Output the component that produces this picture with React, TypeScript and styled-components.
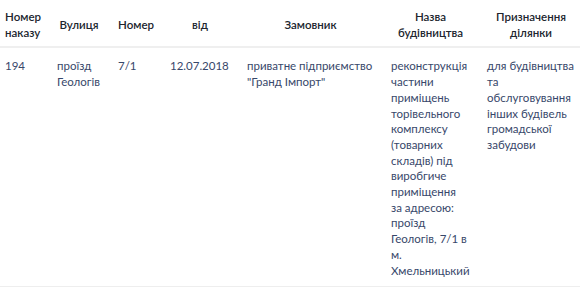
import styled, { createGlobalStyle } from "styled-components"

const GlobalStyle = createGlobalStyle`
  body {
    margin: 0;
    background: #fff;
    font-family: Lato, "Open Sans", sans-serif;
  }
`

type Column = {
  key: string
  title: string[]
  pad: number
}

// pad: right padding of the body cell, sets how wide each text column wraps
const columns: Column[] = [
  { key: "order", title: ["Номер", "наказу"], pad: 12 },
  { key: "street", title: ["Вулиця"], pad: 12 },
  { key: "number", title: ["Номер"], pad: 12 },
  { key: "date", title: ["від"], pad: 12 },
  { key: "customer", title: ["Замовник"], pad: 10 },
  { key: "building", title: ["Назва", "будівництва"], pad: 19 },
  { key: "purpose", title: ["Призначення", "ділянки"], pad: 5 },
]

const rows: Record<string, string>[] = [
  {
    order: "194",
    street: "проїзд Геологів",
    number: "7/1",
    date: "12.07.2018",
    customer: "приватне підприємство \"Гранд Імпорт\"",
    building:
      "реконструкція частини приміщень торівельного комплексу (товарних складів) під виробгиче приміщення за адресою: проїзд Геологів, 7/1 в м. Хмельницький",
    purpose:
      "для будівництва та обслуговування інших будівель громадської забудови",
  },
]

const Table = styled.div`
  width: 580px;
  font-family: Lato, "Open Sans", sans-serif;
`

const Row = styled.div<{ $head?: boolean }>`
  display: grid;
  grid-template-columns: 57px 61px 52px 77px 144px 96px 93px;
  align-items: ${(p) => (p.$head ? "center" : "stretch")};
  border-bottom: ${(p) => (p.$head ? "2px solid #efefef" : "1px solid #eeeeee")};
`

const HeadCell = styled.div`
  padding: 9px 17px 6px 0;
  text-align: center;
  font-size: 11.5px;
  line-height: 15.7px;
  font-weight: 600;
  color: #20252e;

  &:first-child {
    padding-left: 5px;
  }
  &:last-child {
    padding-right: 5px;
  }

  span {
    display: block;
  }
`

const Cell = styled.div<{ $pad: number }>`
  padding: 10px ${(p) => p.$pad}px 8px 0;
  font-size: 11.5px;
  line-height: 15.7px;
  color: #37476a;

  &:first-child {
    padding-left: 5px;
  }
`

const App = () => {
  return (
    <>
      <GlobalStyle />
      <Table>
        <Row $head>
          {columns.map((col) => (
            <HeadCell key={col.key}>
              {col.title.map((line) => (
                <span key={line}>{line}</span>
              ))}
            </HeadCell>
          ))}
        </Row>
        {rows.map((row) => (
          <Row key={row.order}>
            {columns.map((col) => (
              <Cell key={col.key} $pad={col.pad}>
                {row[col.key]}
              </Cell>
            ))}
          </Row>
        ))}
      </Table>
    </>
  )
}

export default App
